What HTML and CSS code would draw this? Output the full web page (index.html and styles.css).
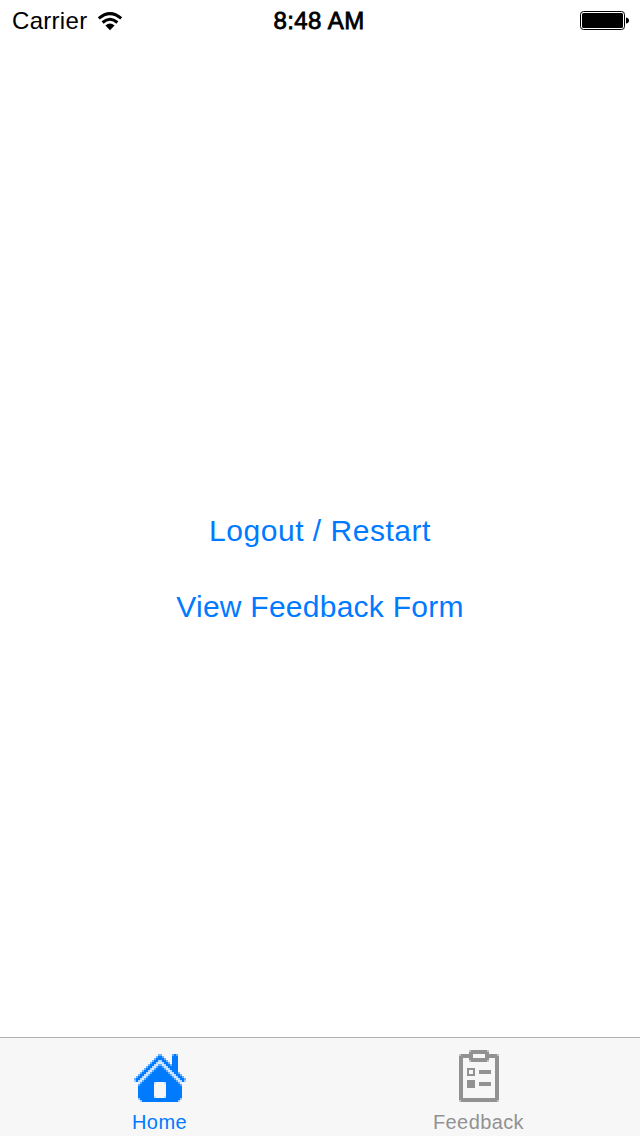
FILE: index.html
```
<!DOCTYPE html>
<html lang="en">
<head>
<meta charset="utf-8">
<title>Home</title>
<link rel="stylesheet" href="styles.css">
</head>
<body>
<div class="screen">
  <header class="status">
    <div class="carrier"><span>Carrier</span>
      <svg class="wifi" width="26" height="19" viewBox="0 0 26 19">
        <path d="M1.8 6.4Q13-3.2 24.2 6.4" fill="none" stroke="#000" stroke-width="3"/>
        <path d="M5.6 10.5Q13 4.1 20.4 10.5" fill="none" stroke="#000" stroke-width="3"/>
        <path d="M8.4 13.4Q13 9.6 17.6 13.4L13 18.2Z"/>
      </svg>
    </div>
    <div class="time">8:48 AM</div>
    <svg class="battery" width="50" height="20" viewBox="0 0 50 20">
      <rect x=".5" y=".5" width="44" height="18" rx="3" fill="#fff" stroke="#000"/>
      <rect x="2" y="2" width="41" height="15" rx="1.5"/>
      <path d="M46 6.5q3 .5 3 3t-3 3z"/>
    </svg>
  </header>
  <main class="actions">
    <a class="action logout">Logout / Restart</a>
    <a class="action view">View Feedback Form</a>
  </main>
  <nav class="tabs">
    <a class="tab active">
      <svg class="icon" width="52" height="48" viewBox="0 0 26 24" shape-rendering="crispEdges">
        <defs>
          <path id="gable" d="M0 30V12h1v-1h1v-1h1V9h1V8h1V7h1V6h1V5h1V4h1V3h1V2h1V1h1V0h2v1h1v1h1v1h1v1h1v1h1v1h1v1h1v1h1v1h1v1h1v1h1v1h1v18z"/>
          <clipPath id="roof"><path d="M0 0h26v14H0z"/></clipPath>
          <clipPath id="walls"><path d="M2 0h22v23h-1v1H3v-1H2z"/></clipPath>
        </defs>
        <path fill="#007aff" d="M19 0h3v12h-3z"/>
        <path fill="#5eabff" d="M19 0h1v1h-1zM21 0h1v1h-1z"/>
        <g clip-path="url(#roof)">
          <use href="#gable" fill="#6bb1fe"/>
          <use href="#gable" y="1" fill="#007aff"/>
        </g>
        <path fill="#007aff" d="M19 1h3v8h-1V8h-1V7h-1z"/>
        <g clip-path="url(#walls)">
          <use href="#gable" y="3" fill="#b5d7fc"/>
          <use href="#gable" y="4" fill="#deebf8"/>
          <use href="#gable" y="5" fill="#5eabff"/>
          <use href="#gable" y="6" fill="#007aff"/>
        </g>
        <path fill="#9bcafc" d="M0 13h1v1H0zM25 13h1v1h-1zM2 22h1v1H2zM3 23h1v1H3zM23 22h1v1h-1zM22 23h1v1h-1z"/>
        <path fill="#f7f7f7" d="M10 14h6v8h-6z"/>
        <path fill="#c9e2fc" d="M10 14h1v1h-1zM15 14h1v1h-1zM10 21h1v1h-1zM15 21h1v1h-1z"/>
      </svg>
      <span class="label home">Home</span>
    </a>
    <a class="tab second">
      <svg class="icon" width="40" height="52" viewBox="0 0 20 26" shape-rendering="crispEdges">
        <path fill="#929292" fill-rule="evenodd" d="M0 2h5V0h10v2h5v24H0zM2 4v20h16V4h-3v2H5V4zM7 2v2h6V2z"/>
        <path fill="#929292" fill-rule="evenodd" d="M4 9h4v4H4zM5 10v2h2v-2zM10 10h6v2h-6zM4 15h4v4H4zM10 16h6v2h-6z"/>
        <path fill="#c4c4c4" d="M0 2h1v1H0zM19 2h1v1h-1zM5 0h1v1H5zM14 0h1v1h-1zM5 5h1v1H5zM14 5h1v1h-1zM0 25h1v1H0zM19 25h1v1h-1z"/>
      </svg>
      <span class="label feedback">Feedback</span>
    </a>
  </nav>
</div>
</body>
</html>
```
FILE: styles.css
```
body {
  margin: 0;
  font-family: "Liberation Sans", Arial, sans-serif;
  background: #fff;
}
.screen {
  display: flex;
  flex-direction: column;
  height: 1136px;
}
.status {
  display: grid;
  grid-template-columns: 1fr auto 1fr;
  align-items: center;
  height: 42px;
  padding: 0 10px 0 12px;
  font-size: 24px;
  line-height: 42px;
}
.carrier {
  display: flex;
  align-items: center;
  gap: 10px;
  letter-spacing: 0.3px;
}
.time {
  margin-left: -4px;
  letter-spacing: 0.45px;
  -webkit-text-stroke: 0.8px #000;
}
.battery {
  justify-self: end;
}
.actions {
  flex: 1;
  display: flex;
  flex-direction: column;
  align-items: center;
  justify-content: center;
  gap: 40px;
  padding-top: 58px;
}
.action {
  color: #007aff;
  font-size: 30px;
  line-height: 36px;
}
.logout {
  letter-spacing: 0.52px;
}
.view {
  letter-spacing: 0.25px;
}
.tabs {
  display: flex;
  box-sizing: border-box;
  height: 99px;
  border-top: 1px solid #b2b2b2;
  background: #f7f7f7;
}
.tab {
  flex: 1;
  display: flex;
  flex-direction: column;
  align-items: center;
  color: #929292;
  font-size: 20px;
  line-height: 24px;
}
.tab.active {
  color: #007aff;
}
.second {
  box-sizing: border-box;
  padding-right: 2px;
}
.icon {
  margin: 12px 0 8px;
}
.active .icon {
  margin: 16px 0 8px;
}
.home {
  letter-spacing: 0.4px;
}
.feedback {
  letter-spacing: 0.4px;
}
```
